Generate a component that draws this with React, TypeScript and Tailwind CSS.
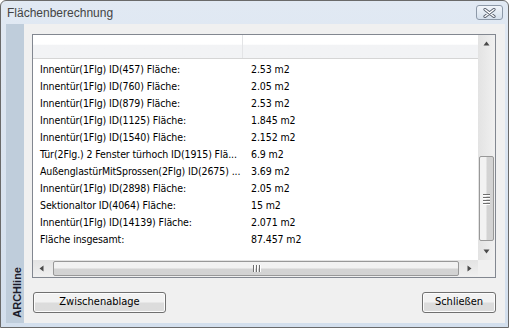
import React from "react";

const rows = [
  ["Innentür(1Flg) ID(457) Fläche:", "2.53 m2"],
  ["Innentür(1Flg) ID(760) Fläche:", "2.05 m2"],
  ["Innentür(1Flg) ID(879) Fläche:", "2.53 m2"],
  ["Innentür(1Flg) ID(1125) Fläche:", "1.845 m2"],
  ["Innentür(1Flg) ID(1540) Fläche:", "2.152 m2"],
  ["Tür(2Flg.) 2 Fenster türhoch ID(1915) Flä...", "6.9 m2"],
  ["AußenglastürMitSprossen(2Flg) ID(2675) ...", "3.69 m2"],
  ["Innentür(1Flg) ID(2898) Fläche:", "2.05 m2"],
  ["Sektionaltor ID(4064) Fläche:", "15 m2"],
  ["Innentür(1Flg) ID(14139) Fläche:", "2.071 m2"],
  ["Fläche insgesamt:", "87.457 m2"],
];

const uiFont = '"DejaVu Sans Condensed", "Liberation Sans", Arial, sans-serif';

const Arrow = ({ dir }: { dir: "up" | "down" | "left" | "right" }) => {
  const pts = {
    up: "0.5,4.5 3.5,0.5 6.5,4.5",
    down: "0.5,0.5 3.5,4.5 6.5,0.5",
    left: "4.5,0.5 0.5,3.5 4.5,6.5",
    right: "0.5,0.5 4.5,3.5 0.5,6.5",
  }[dir];
  const vert = dir === "up" || dir === "down";
  return (
    <svg width={vert ? 7 : 5} height={vert ? 5 : 7} viewBox={vert ? "0 0 7 5" : "0 0 5 7"}>
      <polygon points={pts} fill="#4a4a4a" />
    </svg>
  );
};

const WinButton = ({ label, w }: { label: string; w: string }) => (
  <button
    className={`${w} h-[21px] rounded-[3px] border border-[#707070] bg-gradient-to-b from-[#f2f2f2] from-45% to-[#dcdcdc] to-55% text-[11px] text-black shadow-[inset_0_0_0_1px_#fcfcfc]`}
    style={{ fontFamily: uiFont }}
  >
    {label}
  </button>
);

export default function App() {
  return (
    <div
      className="w-[509px] h-[328px] border border-[#6a6a6a] rounded-t-[6px] bg-gradient-to-b from-[#e1e9f3] to-[#d3dfed] flex flex-col overflow-hidden"
      style={{ fontFamily: '"Liberation Sans", Arial, sans-serif' }}
    >
      {/* title bar */}
      <div className="h-[23px] flex items-center justify-between pl-[6px] pr-[5px]">
        <span className="text-[12px] text-[#444] pt-[1px]">Flächenberechnung</span>
        <div className="w-[27px] h-[15px] rounded-[3px] border border-[#8d99a8] bg-gradient-to-b from-[#f1f5fa] to-[#d5e0ec] flex items-center justify-center">
          <svg width="13" height="10" viewBox="0 0 13 10">
            <path d="M2 1.5 L11 8.5 M11 1.5 L2 8.5" stroke="#5a6270" strokeWidth="3.2" strokeLinecap="round" />
            <path d="M2 1.5 L11 8.5 M11 1.5 L2 8.5" stroke="#ffffff" strokeWidth="1.4" strokeLinecap="round" />
          </svg>
        </div>
      </div>

      {/* client */}
      <div className="flex-1 ml-[5px] mr-[3px] mb-[4px] bg-[#f0f0f0] flex">
        <div className="w-[18px] bg-[#bfcddb] flex flex-col justify-end items-end pb-[5px] pr-[1px]">
          <span className="[writing-mode:vertical-rl] rotate-180 text-[11px] font-bold text-[#1b1b2a] leading-[11px]">
            ARCHline
          </span>
        </div>

        <div className="flex-1 flex flex-col pl-[8px] pr-[9px] pt-[10px]">
          {/* list view */}
          <div className="h-[244px] border border-[#828790] bg-white flex">
            <div className="w-[445px] flex flex-col">
              <div className="h-[24px] flex border-b border-[#d5d5d5] bg-gradient-to-b from-white from-40% to-[#f2f3f5] to-45%">
                <div className="w-[210px] border-r border-[#e3e4e6]" />
                <div className="w-[233px]" />
              </div>
              <div
                className="flex-1 pt-[2px] overflow-hidden text-[10.5px] tracking-[-0.1px] text-black"
                style={{ fontFamily: uiFont }}
              >
                {rows.map(([a, b]) => (
                  <div key={a} className="h-[17px] leading-[17px] flex">
                    <div className="w-[211px] pl-[7px] whitespace-nowrap overflow-hidden">{a}</div>
                    <div className="pl-[7px] whitespace-nowrap">{b}</div>
                  </div>
                ))}
              </div>
              {/* horizontal scrollbar */}
              <div className="h-[17px] bg-gradient-to-b from-[#e3e3e3] to-[#f0f0f0] flex items-center">
                <div className="w-[17px] h-full flex items-center justify-center">
                  <Arrow dir="left" />
                </div>
                <div className="flex-1 h-full py-[1px] pl-[3px] pr-[2px]">
                  <div className="h-full rounded-[2px] border border-[#989898] bg-gradient-to-b from-[#f2f2f2] from-45% to-[#d3d3d3] to-55% flex items-center justify-center gap-[1px]">
                    <div className="w-[1px] h-[7px] bg-[#6f6f6f] shadow-[1px_0_0_#fff]" />
                    <div className="w-[1px] h-[7px] bg-[#6f6f6f] ml-[1px] shadow-[1px_0_0_#fff]" />
                    <div className="w-[1px] h-[7px] bg-[#6f6f6f] ml-[1px] shadow-[1px_0_0_#fff]" />
                  </div>
                </div>
                <div className="w-[17px] h-full flex items-center justify-center">
                  <Arrow dir="right" />
                </div>
              </div>
            </div>

            {/* vertical scrollbar */}
            <div className="flex-1 flex flex-col">
              <div className="flex-1 flex flex-col bg-gradient-to-r from-[#e3e3e3] to-[#f0f0f0]">
                <div className="h-[17px] flex items-center justify-center">
                  <Arrow dir="up" />
                </div>
                <div className="flex-1" />
                <div className="h-[85px] mx-[1px] rounded-[2px] border border-[#989898] bg-gradient-to-r from-[#f2f2f2] from-45% to-[#d3d3d3] to-55% flex flex-col items-center justify-center gap-[1px]">
                  <div className="w-[7px] h-[1px] bg-[#6f6f6f] shadow-[0_1px_0_#fff]" />
                  <div className="w-[7px] h-[1px] bg-[#6f6f6f] mt-[1px] shadow-[0_1px_0_#fff]" />
                  <div className="w-[7px] h-[1px] bg-[#6f6f6f] mt-[1px] shadow-[0_1px_0_#fff]" />
                  <div className="w-[7px] h-[1px] bg-[#6f6f6f] mt-[1px] shadow-[0_1px_0_#fff]" />
                </div>
                <div className="h-[2px]" />
                <div className="h-[17px] flex items-center justify-center">
                  <Arrow dir="down" />
                </div>
              </div>
              <div className="h-[17px] bg-[#f0f0f0]" />
            </div>
          </div>

          {/* buttons */}
          <div className="mt-[14px] flex justify-between pl-[1px]">
            <WinButton label="Zwischenablage" w="w-[133px]" />
            <WinButton label="Schließen" w="w-[74px]" />
          </div>
        </div>
      </div>
    </div>
  );
}
